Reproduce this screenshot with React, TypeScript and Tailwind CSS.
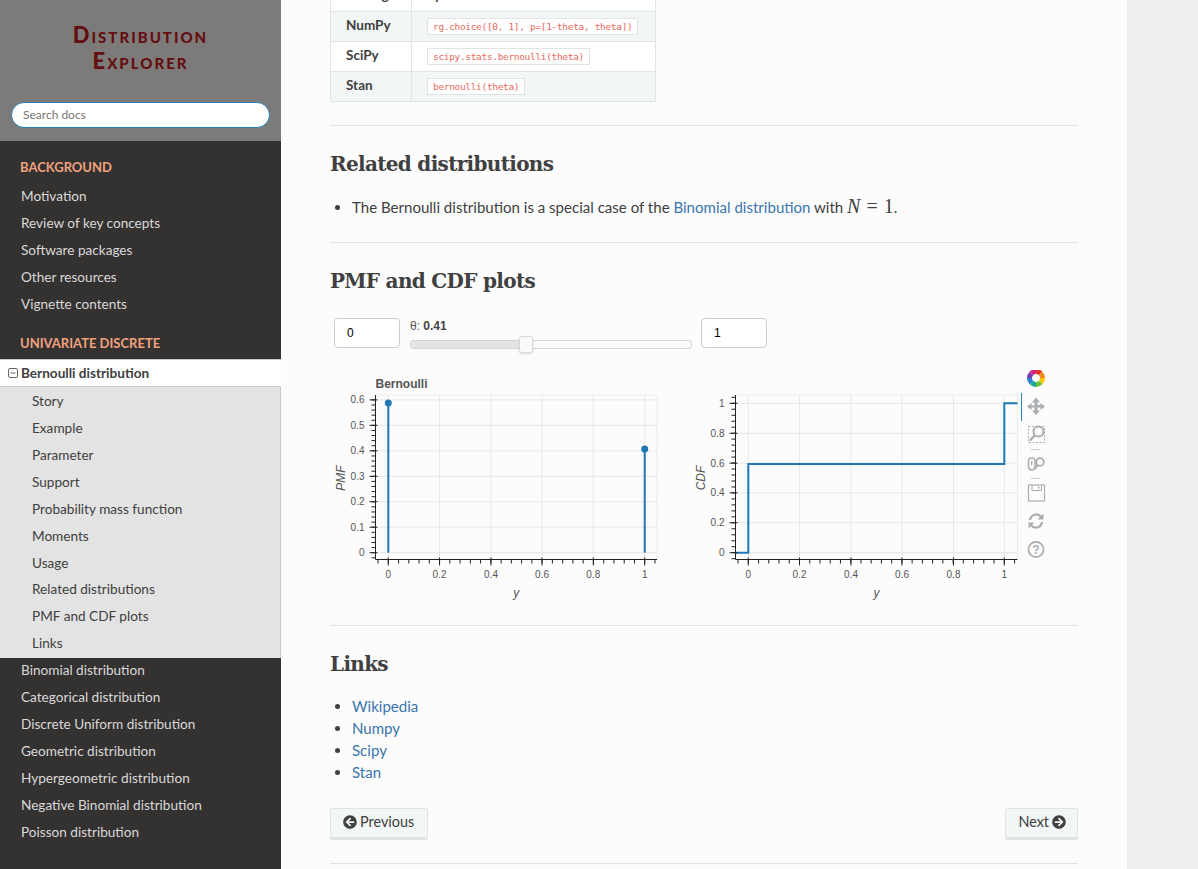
import { FaArrowCircleLeft, FaArrowCircleRight } from "react-icons/fa";

const TOP_LINKS = ["Motivation", "Review of key concepts", "Software packages", "Other resources", "Vignette contents"];
const SUB_LINKS = ["Story", "Example", "Parameter", "Support", "Probability mass function", "Moments", "Usage", "Related distributions", "PMF and CDF plots", "Links"];
const DISCRETE = ["Binomial distribution", "Categorical distribution", "Discrete Uniform distribution", "Geometric distribution", "Hypergeometric distribution", "Negative Binomial distribution", "Poisson distribution"];
const USAGE = [
  ["NumPy", "rg.choice([0, 1], p=[1-theta, theta])"],
  ["SciPy", "scipy.stats.bernoulli(theta)"],
  ["Stan", "bernoulli(theta)"],
];
const SANS = "font-['Lato','Noto_Sans',sans-serif]";

function Sidebar() {
  return (
    <aside className="flex w-[281px] shrink-0 flex-col bg-[#343131] text-[13.6px] text-[#d9d9d9]">
      <div className="flex h-[141px] flex-col items-center bg-[#7d7b79] px-[11px]">
        <div className="mt-[22px] text-center font-['Lato',sans-serif] text-[22px] leading-[26px] font-black tracking-[2px] text-[#640e12] [font-variant:small-caps]">
          Distribution
          <br />
          Explorer
        </div>
        <div className="mt-[28px] flex h-[26px] w-full items-center rounded-full border border-[#2980b9] bg-white pl-[11px] text-[12px] text-[#777]">
          Search docs
        </div>
      </div>
      <div className="mt-[15px] px-[20px] text-[13px] leading-[22px] font-bold text-[#f0a27e]">BACKGROUND</div>
      <ul className="mt-[5px]">
        {TOP_LINKS.map((t) => (
          <li key={t} className="flex h-[27px] items-center pl-[21px]">{t}</li>
        ))}
      </ul>
      <div className="mt-[14px] px-[20px] text-[13px] leading-[22px] font-bold text-[#f0a27e]">UNIVARIATE DISCRETE</div>
      <div className="mt-[5px] flex h-[28px] items-center border-y border-[#c9c9c9] bg-white pl-[8px] font-bold text-[#404040]">
        <svg width="10" height="10" viewBox="0 0 10 10" fill="none" stroke="#666" className="mr-[3px]">
          <rect x="0.5" y="0.5" width="9" height="9" rx="1.5" />
          <path d="M2.5 5h5" />
        </svg>
        Bernoulli distribution
      </div>
      <ul className="border-r border-[#c9c9c9] bg-[#e3e3e3] pt-[1px] pb-[1px] text-[#404040]">
        {SUB_LINKS.map((t) => (
          <li key={t} className="flex h-[26.9px] items-center pl-[32px]">{t}</li>
        ))}
      </ul>
      <ul className="-mt-[1px]">
        {DISCRETE.map((t) => (
          <li key={t} className="flex h-[27px] items-center pl-[21px]">{t}</li>
        ))}
      </ul>
    </aside>
  );
}

function UsageTable() {
  return (
    <table className="-mt-[19px] w-[326px] table-fixed border-collapse text-[13.5px] text-[#404040]">
      <tbody>
        <tr className="h-[30px] bg-white">
          <td className="w-[81px] border border-[#e1e4e5] pb-[3px] pl-[15px] font-bold">Package</td>
          <td className="border border-[#e1e4e5] pb-[3px] pl-[15px] font-bold">Syntax</td>
        </tr>
        {USAGE.map(([name, code], i) => (
          <tr key={name} className={i % 2 === 0 ? "h-[30px] bg-[#f3f6f6]" : "h-[30px] bg-white"}>
            <td className="border border-[#e1e4e5] pb-[3px] pl-[15px] font-bold">{name}</td>
            <td className="border border-[#e1e4e5] pl-[15px]">
              <code className="block h-[17px] w-fit border border-[#e1e4e5] bg-white px-[5px] font-['DejaVu_Sans_Mono',monospace] text-[9.5px] leading-[15px] tracking-[-0.33px] text-[#e8695c]">
                {code}
              </code>
            </td>
          </tr>
        ))}
      </tbody>
    </table>
  );
}

function range(n: number) {
  return Array.from({ length: n }, (_, i) => i);
}

type PlotProps = {
  x0: number;
  width: number;
  axisX: number;
  rightX: number;
  xs: number[];
  ys: { y: number; label: string }[];
  yLabel: string;
  labelX: number;
  title?: string;
  children: React.ReactNode;
};

// Bokeh style figure: drawn in page coordinates through the viewBox
function Plot({ x0, width, axisX, rightX, xs, ys, yLabel, labelX, title, children }: PlotProps) {
  const top = 395;
  const axisY = 559.5;
  const xLabels = ["0", "0.2", "0.4", "0.6", "0.8", "1"];
  const dx = (xs[5] - xs[0]) / 25;
  const dy = (ys[ys.length - 1].y - ys[0].y) / ((ys.length - 1) * 5);
  const xMinor = range(40)
    .map((i) => xs[0] + (i - 5) * dx)
    .filter((v) => v > axisX && v < rightX);
  const yMinor = range(60)
    .map((i) => ys[0].y + (i - 10) * dy)
    .filter((v) => v > top && v < axisY);
  return (
    <svg width={width} height={240} viewBox={`${x0} 370 ${width} 240`} className="shrink-0 font-['Liberation_Sans',sans-serif]">
      {title && (
        <text x={axisX} y={388} fontSize="12" fontWeight="700" fill="#555">
          {title}
        </text>
      )}
      <rect x={axisX} y={top} width={rightX - axisX} height={axisY - top} fill="none" stroke="#ececec" />
      {xs.map((v) => (
        <line key={v} x1={v} x2={v} y1={top} y2={axisY} stroke="#e8e8e8" />
      ))}
      {ys.map((t) => (
        <line key={t.label} x1={axisX} x2={rightX} y1={t.y} y2={t.y} stroke="#e8e8e8" />
      ))}
      {children}
      <path d={`M${axisX} ${top}V${axisY}H${rightX}`} fill="none" stroke="#222" />
      {xMinor.map((v) => (
        <line key={v} x1={v} x2={v} y1={axisY} y2={axisY + 4} stroke="#222" />
      ))}
      {yMinor.map((v) => (
        <line key={v} x1={axisX - 4} x2={axisX} y1={v} y2={v} stroke="#222" />
      ))}
      {xs.map((v, i) => (
        <g key={v}>
          <line x1={v} x2={v} y1={axisY - 2} y2={axisY + 6} stroke="#222" />
          <text x={v} y={578} textAnchor="middle" fontSize="10" fill="#555">
            {xLabels[i]}
          </text>
        </g>
      ))}
      {ys.map((t) => (
        <g key={t.label}>
          <line x1={axisX - 6} x2={axisX + 2} y1={t.y} y2={t.y} stroke="#222" />
          <text x={axisX - 11} y={t.y + 3.5} textAnchor="end" fontSize="10" fill="#555">
            {t.label}
          </text>
        </g>
      ))}
      <text x={(axisX + rightX) / 2 + 0} y={597} textAnchor="middle" fontSize="12" fontStyle="italic" fill="#555">
        y
      </text>
      <text transform={`translate(${labelX} 478) rotate(-90)`} textAnchor="middle" fontSize="12" fontStyle="italic" fill="#555">
        {yLabel}
      </text>
    </svg>
  );
}

const LOGO_COLORS = ["#e0352b", "#f08a1d", "#f6c800", "#6fbf3a", "#18a99b", "#2f7fd1", "#7a3fb0", "#d6257e"];

function Toolbar() {
  const c = "#a9adb0";
  return (
    <svg width={58} height={240} viewBox="1020 370 58 240" className="shrink-0">
      <line x1="1021.5" x2="1021.5" y1="393" y2="421" stroke="#2a86c2" />
      {LOGO_COLORS.map((col, i) => (
        <path
          key={col}
          d="M1036 371.5a6.5 6.5 0 0 1 4.6 1.9"
          transform={`rotate(${i * 45} 1036 378)`}
          fill="none"
          stroke={col}
          strokeWidth="5"
        />
      ))}
      <path
        d="M1036 397.500l4 4.500h-2.500v3h3V403l4.500 3.500-4.500 3.500v-2.500h-3v3h2.500l-4 4.500-4-4.500h2.500v-3h-3v2.500l-4.500-3.500 4.500-3.500v2.500h3v-3h-2.500z"
        fill={c}
      />
      <rect x="1028.500" y="426.500" width="16" height="16" fill="none" stroke={c} strokeDasharray="2 1.500" />
      <circle cx="1038.500" cy="431.500" r="5" fill="#fcfcfc" stroke={c} strokeWidth="2" />
      <path d="M1035 435l-5 5.500" stroke={c} strokeWidth="2.500" />
      <line x1="1031" x2="1040" y1="449.500" y2="449.500" stroke="#ccc" />
      <rect x="1028.500" y="458" width="6.500" height="12" rx="3.200" fill="none" stroke={c} strokeWidth="1.500" />
      <line x1="1031.700" x2="1031.700" y1="461" y2="465" stroke={c} strokeWidth="1.500" />
      <circle cx="1040" cy="462" r="3.800" fill="none" stroke={c} strokeWidth="1.800" />
      <path d="M1037.500 465l-2.500 4" stroke={c} strokeWidth="2" />
      <line x1="1031" x2="1040" y1="478.500" y2="478.500" stroke="#ccc" />
      <rect x="1028.500" y="485" width="16" height="16" fill="none" stroke={c} strokeWidth="1.200" />
      <path d="M1032 485v5.500h9.500v-5.500" fill="none" stroke={c} />
      <rect x="1038" y="486.500" width="1.500" height="2" fill={c} />
      <path d="M1030 520a6.300 6.300 0 0 1 11-3.300M1042 522a6.300 6.300 0 0 1-11 3.300" fill="none" stroke={c} strokeWidth="2.200" />
      <path d="M1043.500 513.500v6h-6zM1028.500 528.500v-6h6z" fill={c} />
      <circle cx="1036" cy="549.500" r="7.600" fill="none" stroke={c} strokeWidth="1.600" />
      <text x="1036" y="554" textAnchor="middle" fontSize="12" fontWeight="700" fill={c} fontFamily="'Liberation Sans',sans-serif">
        ?
      </text>
    </svg>
  );
}

const H2 = "font-['DejaVu_Serif',serif] text-[20px] leading-[32px] font-bold tracking-[-0.68px] text-[#404040]";
const HR = "border-t border-[#e1e4e5]";
const NUM_INPUT = "h-[30px] w-[66px] rounded-[4px] border border-[#ccc] bg-white pl-[12px] font-['Liberation_Sans',sans-serif] text-[12px] text-black outline-none";
const LINK = "text-[#3a74ad]";
const BTN = "flex h-[32px] items-center gap-[3px] rounded-[2px] border border-[#e1e4e5] border-b-[3px] bg-[#f3f6f6] pb-[2px] text-[14.4px] text-[#404040]";

export default function App() {
  const pmfX = [388.3, 439.5, 491, 542, 593.3, 644.7];
  const pmfY = [
    { y: 552.7, label: "0" },
    { y: 527.2, label: "0.1" },
    { y: 501.7, label: "0.2" },
    { y: 476.3, label: "0.3" },
    { y: 450.8, label: "0.4" },
    { y: 425.3, label: "0.5" },
    { y: 399.9, label: "0.6" },
  ];
  const cdfX = [748.3, 799.5, 851, 902, 953.5, 1004.3];
  const cdfY = [
    { y: 552.7, label: "0" },
    { y: 522.7, label: "0.2" },
    { y: 492.8, label: "0.4" },
    { y: 463.2, label: "0.6" },
    { y: 433.3, label: "0.8" },
    { y: 403.3, label: "1" },
  ];
  return (
    <div className={`flex h-[869px] overflow-hidden bg-[#efefef] ${SANS}`}>
      <Sidebar />
      <main className="h-[869px] w-[846px] shrink-0 overflow-hidden bg-[#fcfcfc] px-[49px] text-[15.05px] text-[#404040]">
        <UsageTable />
        <hr className={`mt-[23px] ${HR}`} />
        <h2 className={`mt-[22px] ${H2}`}>Related distributions</h2>
        <ul className="mt-[16px] list-disc pl-[22px] leading-[22px]">
          <li>
            The Bernoulli distribution is a special case of the <span className={LINK}>Binomial distribution</span> with{" "}
            <span className="font-['Liberation_Serif',serif] text-[20px] leading-none">
              <i>N</i>
              <span className="mx-[6px]">=</span>1
            </span>
            .
          </li>
        </ul>
        <hr className={`mt-[24px] ${HR}`} />
        <h2 className={`mt-[22px] ${H2}`}>PMF and CDF plots</h2>
        <div className="mt-[21px] flex h-[30px] items-start pl-[4px]">
          <input readOnly value="0" className={NUM_INPUT} />
          <div className="ml-[10px] w-[282px] font-['Liberation_Sans',sans-serif] text-[12px] leading-[14px]">
            <div className="mt-[1px] text-[#555]">
              θ: <b className="text-[#444]">0.41</b>
            </div>
            <div className="relative mt-[7px] h-[9px] rounded-[3px] border border-[#d4d4d4] bg-[#fafafa]">
              <div className="h-full w-[115px] bg-[#e4e4e4]" />
              <div className="absolute top-[-5px] left-[108px] h-[17px] w-[14px] rounded-[3px] border border-[#d9d9d9] bg-[#fafafa] shadow-sm" />
            </div>
          </div>
          <input readOnly value="1" className={`ml-[9px] ${NUM_INPUT}`} />
        </div>
        <div className="mt-[22px] flex">
          <Plot x0={330} width={360} axisX={375.5} rightX={657} xs={pmfX} ys={pmfY} yLabel="PMF" labelX={345} title="Bernoulli">
            <g stroke="#1f77b4" strokeWidth="2" fill="#1f77b4">
              <line x1={388.3} x2={388.3} y1={552.7} y2={403} />
              <line x1={644.7} x2={644.7} y1={552.7} y2={449} />
              <circle cx={388.3} cy={403} r={2.5} />
              <circle cx={644.7} cy={449} r={2.5} />
            </g>
          </Plot>
          <Plot x0={690} width={330} axisX={735.5} rightX={1017.5} xs={cdfX} ys={cdfY} yLabel="CDF" labelX={705}>
            <path d="M736 552.7H748.3V464H1004.3V403.3H1017.5" fill="none" stroke="#1f77b4" strokeWidth="2" />
          </Plot>
          <Toolbar />
        </div>
        <hr className={`mt-[15px] ${HR}`} />
        <h2 className={`mt-[22px] ${H2}`}>Links</h2>
        <ul className="mt-[15px] list-disc pl-[22px] leading-[22px]">
          {["Wikipedia", "Numpy", "Scipy", "Stan"].map((t) => (
            <li key={t}>
              <span className={LINK}>{t}</span>
            </li>
          ))}
        </ul>
        <div className="mt-[25px] flex justify-between">
          <div className={`${BTN} pr-[13px] pl-[12px]`}>
            <FaArrowCircleLeft className="text-[14px] text-[#404040]" />
            Previous
          </div>
          <div className={`${BTN} pr-[11px] pl-[12px]`}>
            Next
            <FaArrowCircleRight className="text-[14px] text-[#404040]" />
          </div>
        </div>
        <hr className={`mt-[23px] ${HR}`} />
      </main>
    </div>
  );
}
